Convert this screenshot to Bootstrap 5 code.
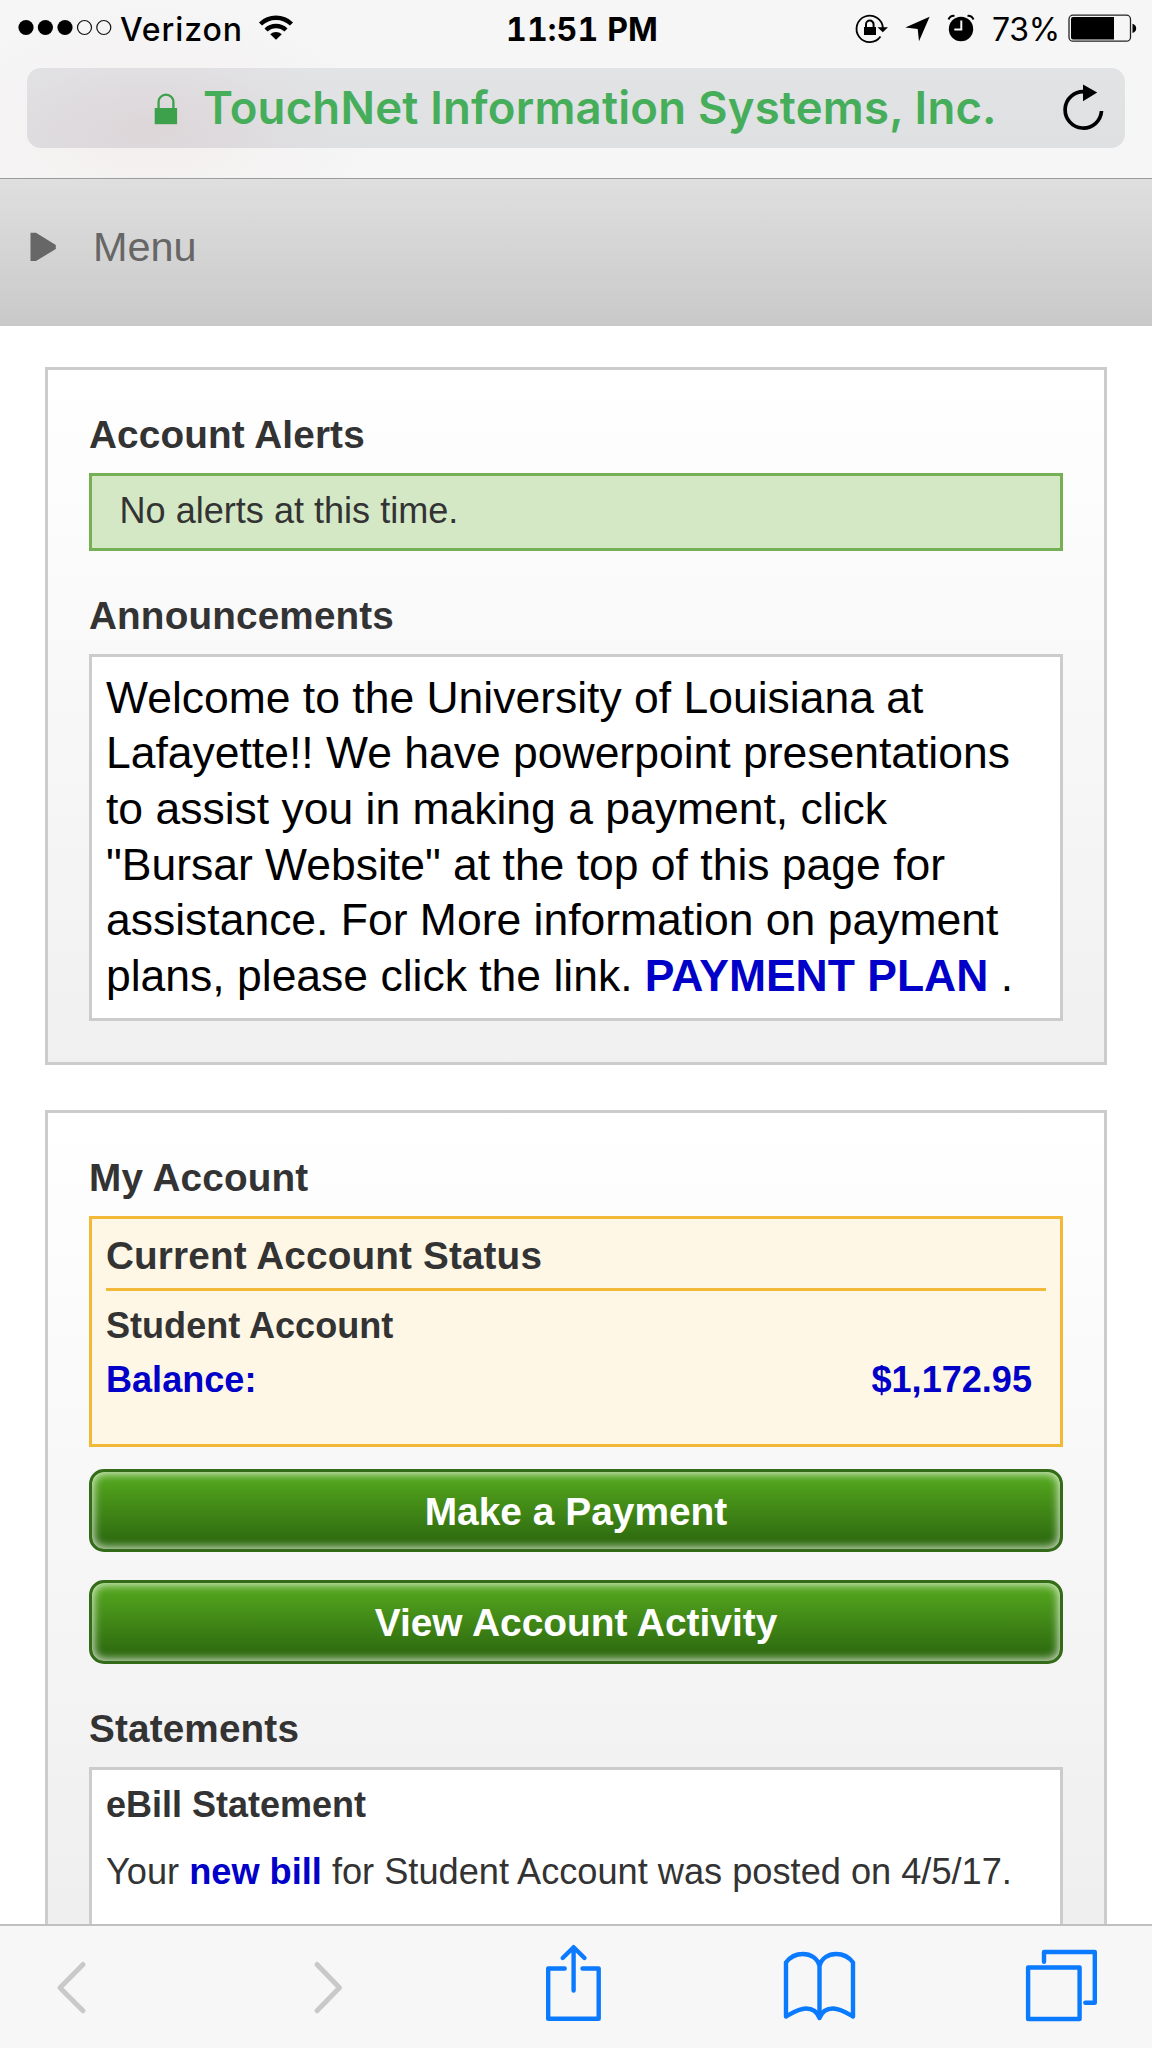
<!DOCTYPE html>
<html lang="en">
<head>
<meta charset="utf-8">
<meta name="viewport" content="width=device-width, initial-scale=1">
<title>My Account</title>
<link href="https://cdn.jsdelivr.net/npm/bootstrap@5.3.0/dist/css/bootstrap.min.css" rel="stylesheet">
<style>
body{font-family:"Liberation Sans",Arial,sans-serif;color:#333;background:#fff;height:2048px;overflow:hidden}
svg{display:block;flex:none}
.chrome-top{height:179px;border-bottom:1px solid #9b9b9b;background:radial-gradient(ellipse 230px 130px at 150px 130px,rgba(225,190,190,.14),transparent),#f6f6f6;font-family:Inter,sans-serif;color:#000;flex:none}
.statusbar{height:59px;line-height:59px;font-size:32px;white-space:nowrap;margin-bottom:9px}
.carrier{width:138px;padding-left:8px;font-weight:500;letter-spacing:.9px}
.clock{width:344px;font-weight:700;letter-spacing:.2px;font-variant-numeric:tabular-nums}
.left-group{width:506px}
.charge{width:75px;font-weight:400;letter-spacing:-.3px;margin-left:-1px;margin-right:1px}
.address{height:80px;margin:0 27px;border-radius:14px;background:radial-gradient(ellipse 190px 90px at 120px 60px,rgba(215,190,195,.3),transparent),linear-gradient(#e2e3e5,#dfe0e2)}
.site-name{width:860px;font-size:45.5px;line-height:80px;font-weight:600;color:#46ae5b;letter-spacing:.2px;white-space:nowrap}
.menubar{height:147px;background:linear-gradient(#dfdfdf,#c9c9c9);padding-left:30px;flex:none}
.menu-label{font-size:41.4px;line-height:137px;color:#666;padding-left:36px}
.page{min-height:0;overflow:hidden;padding:41px 45px 0 45px}
.panel{border:3px solid #ccc;background:linear-gradient(#fff,#f0f0f0);padding:42.5px 41px 41.5px 41px}
.panel + .panel{margin-top:44.5px;padding-top:43.5px;padding-bottom:0;height:850px;background:linear-gradient(#fff,#eee)}
.panel-title{font-size:38.7px;line-height:44px;font-weight:700;letter-spacing:.15px;margin:0 0 16px}
.box{border:3px solid #ccc;background:#fff}
.box-ok{height:78px;border-color:#76b054;background:#d4e8c6;font-size:36.1px;line-height:70.5px;padding-left:27.5px;margin-bottom:43px}
.box-news{height:367px;padding:13px 14px;color:#000;font-size:44.47px;line-height:55.7px;white-space:nowrap}
a,.blue{color:#0000c8;font-weight:700;text-decoration:none}
.box-status{height:231px;border-color:#f1b937;background:#fff7e6;padding:0 14px;margin-bottom:22px}
.status-title{font-size:38.7px;line-height:65.3px;letter-spacing:.15px;padding-top:4px;border-bottom:3px solid #f1b937;font-weight:700;margin-bottom:8px}
.status-row{font-size:36.1px;line-height:53.3px;font-weight:700}
.amount{padding-right:14px}
.btn-pay{height:83.4px;width:100%;border:3px solid #346b18;border-radius:15px;padding:1px 0 0;color:#fff!important;font-weight:700;font-size:38.9px;line-height:78px;background:linear-gradient(#53a51e 8%,#2f6c10 88%);box-shadow:inset 0 0 9px 2px rgba(255,255,255,.75)}
.btn-pay:first-of-type{margin-bottom:28px}
.btn-last{margin-bottom:43px}
.box-bill{height:300px;padding:13px 14px;font-size:36px;line-height:44px;white-space:nowrap}
.bill-line{font-size:36.2px;padding-top:23px}
.toolbar-ios{height:124px;border-top:2px solid #c0c0c0;background:#f7f7f7;flex:none}
.ios-blue{fill:none;stroke:#0a7aff;stroke-width:4.4;stroke-linecap:round;stroke-linejoin:round}
.ios-off{fill:none;stroke:#c9c9c9;stroke-width:5;stroke-linecap:round;stroke-linejoin:round}
</style>
</head>
<body class="d-flex flex-column">
<header class="chrome-top">
  <div class="statusbar d-flex">
    <div class="left-group d-flex">
      <svg width="112" height="59" viewBox="0 0 112 59"><g><circle cx="26" cy="27.5" r="7.6"/><circle cx="45.4" cy="27.5" r="7.6"/><circle cx="65" cy="27.5" r="7.6"/></g><g fill="none" stroke="#111" stroke-width="1.2"><circle cx="84.5" cy="27.5" r="7"/><circle cx="103.8" cy="27.5" r="7"/></g></svg>
      <span class="carrier">Verizon</span>
      <svg width="50" height="59" viewBox="250 0 50 59"><g fill="none" stroke="#000" stroke-width="4.4"><path d="M260.5 24a22.5 22.5 0 0 1 31 0"/><path d="M266 30a14.5 14.5 0 0 1 20 0"/></g><path d="M270.2 34.3a8.5 8.5 0 0 1 11.6 0L276 39.7z"/></svg>
    </div>
    <span class="clock">11:51 PM</span>
    <svg width="143" height="59" viewBox="850 0 143 59">
      <g fill="none" stroke="#000"><path d="M880.5 36.5a13.2 13.2 0 1 1 2.4-8.5" stroke-width="1.8"/><path d="M866 28v-3.6a3.8 3.8 0 0 1 7.6 0V28" stroke-width="2"/></g>
      <path d="M864 27h12v8h-12zM877.5 27.3h10.5l-5.2 5z"/>
      <path d="M929.6 16.8 919 41.3 917.7 29 905.3 27.5z"/>
      <circle cx="961" cy="29" r="12.2"/><path d="M948.5 19.5a6 6 0 0 1 6-3.6M973.5 19.5a6 6 0 0 0-6-3.6" fill="none" stroke="#000" stroke-width="2"/>
      <path d="M961.3 20.5v9h-7" fill="none" stroke="#f6f6f6" stroke-width="2"/>
    </svg>
    <span class="charge">73%</span>
    <svg width="72" height="59" viewBox="1068 0 72 59"><rect x="1069" y="15.2" width="61.5" height="26" rx="4" fill="none" stroke="#222" stroke-width="1.3"/><path d="M1073 17h41v22.5h-41a2 2 0 0 1-2-2V19a2 2 0 0 1 2-2zM1132.5 23.7q3.7 1 3.7 4.6t-3.7 4.6z"/></svg>
  </div>
  <div class="address d-flex">
    <svg width="176" height="80" viewBox="27 68 176 80"><path d="M154.7 108h22.4v16.2h-22.4z" fill="#3da04b"/><path d="M158.6 109v-7a7.4 7.4 0 0 1 14.8 0v7" fill="none" stroke="#3da04b" stroke-width="2.3"/></svg>
    <span class="site-name">TouchNet Information Systems, Inc.</span>
    <svg width="60" height="80" viewBox="1063 68 60 80"><path d="M1084.5 91.7A18.2 18.2 0 1 0 1101.5 111" fill="none" stroke="#000" stroke-width="3.7"/><path d="M1083 84.6v16.6l14.2-8.8z"/></svg>
  </div>
</header>
<nav class="menubar d-flex">
  <svg width="27" height="137" viewBox="30 179 27 137"><path d="M30.5 232.7h5.5L55.8 245v4L36 261h-5.5z" fill="#676767"/></svg>
  <span class="menu-label">Menu</span>
</nav>
<main class="page flex-grow-1">
  <section class="panel">
    <h2 class="panel-title">Account Alerts</h2>
    <div class="box box-ok">No alerts at this time.</div>
    <h2 class="panel-title">Announcements</h2>
    <div class="box box-news">Welcome to the University of Louisiana at<br>Lafayette!! We have powerpoint presentations<br>to assist you in making a payment, click<br>"Bursar Website" at the top of this page for<br>assistance. For More information on payment<br>plans, please click the link. <a href="#">PAYMENT PLAN</a> .</div>
  </section>
  <section class="panel">
    <h2 class="panel-title">My Account</h2>
    <div class="box box-status">
      <div class="status-title">Current Account Status</div>
      <div class="status-row">Student Account</div>
      <div class="status-row blue d-flex justify-content-between"><span>Balance:</span><span class="amount">$1,172.95</span></div>
    </div>
    <button class="btn btn-pay d-block">Make a Payment</button>
    <button class="btn btn-pay btn-last d-block">View Account Activity</button>
    <h2 class="panel-title">Statements</h2>
    <div class="box box-bill">
      <div class="fw-bold">eBill Statement</div>
      <div class="bill-line">Your <a href="#">new bill</a> for Student Account was posted on 4/5/17.</div>
    </div>
  </section>
</main>
<footer class="toolbar-ios d-flex justify-content-between">
  <svg width="128" height="122" viewBox="0 1926 128 122"><path class="ios-off" d="M83 1964.5 60 1987.7l23 23"/></svg>
  <svg width="100" height="122" viewBox="276 1926 100 122"><path class="ios-off" d="M317 1964.5l22.5 23.2-22.5 23"/></svg>
  <svg width="100" height="122" viewBox="524 1926 100 122"><path class="ios-blue" d="M564.7 1968.5h-16.5v50.2h50.5v-50.2h-16.2M573.6 1990.5v-43M562.7 1958l10.9-10.8 10.9 10.8"/></svg>
  <svg width="100" height="122" viewBox="772 1926 100 122"><path class="ios-blue" d="M819.5 2018V1966c-2-8-9-12-16.500-12-7 0-13 3-17 8.500v54c7-4 13-8 20-8 7.500 0 11.500 4 13.500 9.500 2-5.500 6-9.500 13.500-9.500 7 0 13 4 20 8v-54c-4-5.500-10-8.500-17-8.500-7.500 0-14.500 4-16.500 12"/></svg>
  <svg width="132" height="122" viewBox="1020 1926 132 122"><path class="ios-blue" d="M1028.1 1967.5h51.5v51.5h-51.5zM1044 1961.7v-9.7h50.8v50.7h-9.5"/></svg>
</footer>
<script src="https://cdn.jsdelivr.net/npm/bootstrap@5.3.0/dist/js/bootstrap.bundle.min.js"></script>
</body>
</html>
